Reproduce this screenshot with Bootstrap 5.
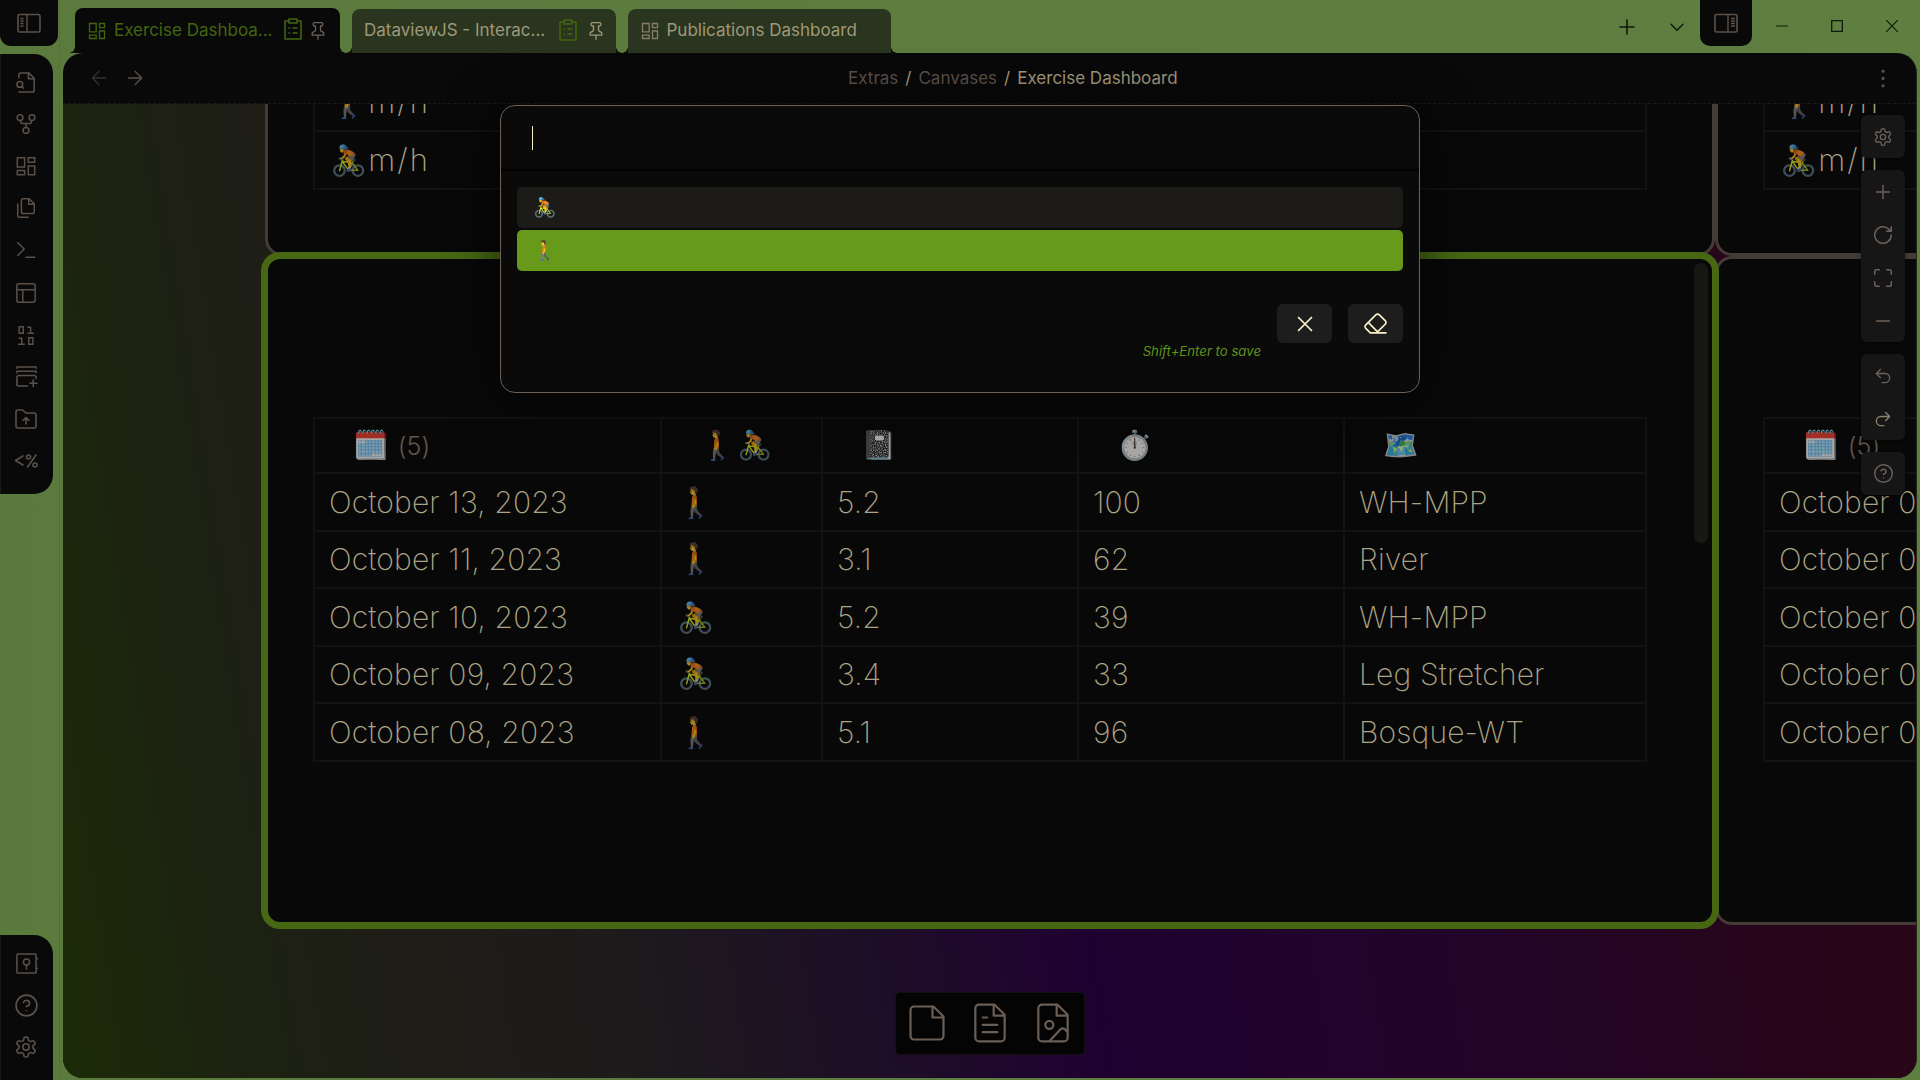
<!DOCTYPE html>
<html lang="en" data-bs-theme="dark">
<head>
<meta charset="utf-8">
<title>Exercise Dashboard</title>
<link href="https://cdn.jsdelivr.net/npm/bootstrap@5.3.0/dist/css/bootstrap.min.css" rel="stylesheet">
<style>
:root{--ink:#5b5149;--panel:#090909;--cream:#a29a7c;--line:#121212}
body{width:1920px;height:1080px;overflow:hidden;background:linear-gradient(90deg,#5b7a3d,#5f7f41);font-family:Inter,"Noto Color Emoji",sans-serif;font-size:17px;color:var(--cream)}
svg{display:block;fill:none;stroke:currentColor;stroke-width:1.6;stroke-linecap:round;stroke-linejoin:round;flex:none}
.rail{width:60px;color:var(--ink);border-right:1px solid #557138;padding-right:1px}
.rail-toggle{width:58px;height:46px;background:var(--panel);border-radius:0 0 11px 11px}
.rail-box{width:53px;background:var(--panel);border-left:1px solid #191919;padding-right:2px}
.rail-main{height:440px;margin-top:8px;border-radius:0 19px 19px 0;padding-top:7px}
.rail-foot{height:145px;border-radius:0 19px 0 0;padding-top:7px}
.rail-item{height:42.1px}
.topbar{height:53px;color:#10190a}
.tabs-wrap{padding-left:11px;gap:12px}
.doc-tab{height:44px;border-radius:8px 8px 0 0;background:#29351e;color:#a09878;white-space:nowrap;position:relative;width:263.5px}
.doc-tab::before,.doc-tab::after{content:"";position:absolute;bottom:0;width:6px;height:6px}
.doc-tab::before{left:-6px;background:radial-gradient(circle at 0 0,transparent 5.5px,#0d110a 6px)}
.doc-tab::after{right:-6px;background:radial-gradient(circle at 100% 0,transparent 5.5px,#0d110a 6px)}
.doc-tab.current{height:45px;width:265px;background:var(--panel);color:#42650f}
.right-toggle{width:52px;height:46px;background:var(--panel);border-radius:0 0 10px 10px;color:var(--ink)}
.leaf{width:1854px;height:1025px;margin-left:-1px;background:var(--panel);border-radius:20px;overflow:hidden;border-right:1px solid #22251d}
.leaf-head{height:51px;border-bottom:1px dashed #1a1a1a;color:var(--ink)}
.crumbs{margin-left:703px;gap:7px;padding-top:2px}
.crumb-last{color:var(--cream)}
.board{position:relative;height:974px;overflow:hidden;background:linear-gradient(81deg,#1b2b07 0%,#1c2211 9%,#1e1d17 18%,#1d1b1b 28%,#1e0c29 43%,#1f0131 52%,#220428 72%,#280518 90%,#2b0713 100%)}
.node{position:absolute;border:3px solid #443b37;border-radius:17px;background:#080808;padding:158px 42px 0 45px;overflow:hidden}
.node-a{left:202px;top:-249px;width:1450px;height:401px;padding:0 45px 63px}
.node-b{left:1652px;top:-249px;width:1500px;height:401px;padding:0 45px 63px}
.node-c{left:1652px;top:152px;width:1500px;height:669px}
.node-sel{left:198px;top:148px;width:1458px;height:677px;border:7px solid #466813;border-radius:19px}
.node-thumb{position:absolute;right:4px;top:4px;width:14px;height:280px;border-radius:7px;background:#181713}
.log{width:1334px;table-layout:fixed;border-collapse:collapse;font-size:30px;font-weight:200;letter-spacing:.15px;line-height:1;flex:none;color:#aca486}
.log td,.log th{border:2px solid var(--line);padding:0 0 0 14px;vertical-align:middle;white-space:nowrap;overflow:hidden}
.log tr.h57 td{padding-bottom:2px}
.log th{padding:2px 0 0 38px;font-weight:300;font-size:25px;color:#62564e}
.emo{opacity:.66;font-family:"Noto Color Emoji"}
.log th .emo{font-size:28.500px;letter-spacing:2px}
.log td .emo{font-size:30px;letter-spacing:0;padding-left:1px}
.speed{letter-spacing:2px;font-size:31px;padding-left:1px}
.h55{height:55px}.h57{height:57px}.h58{height:58px}
.tools{position:absolute;right:11px;top:11px;width:44px;gap:12px;color:#6e625a}
.tool-set{background:#161616;border-radius:6px;box-shadow:0 1px 3px #0008}
.tool-set>div{height:43px}
.makebar{position:absolute;left:832px;top:888px;width:190px;height:63px;border:1px solid #12110f;border-radius:5px;background:#040404;color:#6a5e55;gap:19px;padding-bottom:1px}
.makebar svg{stroke-width:1.2}
.prompt{position:absolute;left:500px;top:105px;width:920px;height:288px;border:1px solid #6d6056;border-radius:15px;background:#0a0a0a;box-shadow:0 4px 50px #000a}
.prompt-input{height:65px;border-bottom:2px solid #020202;padding:20px 0 0 31px}
.caret{width:1px;height:24px;background:#fbf1c7}
.choices{padding-top:16px;gap:2px}
.choice{height:41px;border-radius:5px;background:#1d1b17;padding-left:16px;font-size:19px;line-height:1;font-family:"Noto Color Emoji"}
.choice.picked{background:#67991a}
.prompt-foot{margin-top:33px}
.act{width:55px;height:39px;border-radius:6px;background:#1d1d1d;color:#fbf1c7;border:0;padding:0}
.hint{font-size:13.2px;font-style:italic;color:#5f9118;margin-top:38px}
</style>
</head>
<body>
<svg width="0" height="0" class="position-absolute">
<symbol id="grid" viewBox="0 0 24 24"><path d="M3 3h8v10H3zM15 3h6v5h-6zM15 12h6v9h-6zM3 17h8v4H3z" stroke-linejoin="miter"/></symbol>
<symbol id="clip" viewBox="0 0 24 24"><path d="M8 4H4v18h16V4h-4M8 2h8v4H8zM8 11h.5M12 11h4M8 16h.5M12 16h4"/></symbol>
<symbol id="pin" viewBox="0 0 24 24"><path d="M12 17v5M5 17h14v-1.800a2 2 0 0 0-1.100-1.800l-1.800-.9A2 2 0 0 1 15 10.800V6h1a2 2 0 0 0 0-4H8a2 2 0 0 0 0 4h1v4.800a2 2 0 0 1-1.100 1.700l-1.800.9A2 2 0 0 0 5 15.200Z"/></symbol>
<symbol id="gear" viewBox="0 0 24 24"><path d="M12.220 2h-.440a2 2 0 0 0-2 2v.180a2 2 0 0 1-1 1.730l-.430.250a2 2 0 0 1-2 0l-.150-.080a2 2 0 0 0-2.730.730l-.220.380a2 2 0 0 0 .730 2.730l.150.100a2 2 0 0 1 1 1.720v.510a2 2 0 0 1-1 1.740l-.150.090a2 2 0 0 0-.730 2.730l.220.380a2 2 0 0 0 2.730.730l.150-.080a2 2 0 0 1 2 0l.430.250a2 2 0 0 1 1 1.730V20a2 2 0 0 0 2 2h.440a2 2 0 0 0 2-2v-.180a2 2 0 0 1 1-1.730l.430-.250a2 2 0 0 1 2 0l.150.080a2 2 0 0 0 2.730-.730l.220-.390a2 2 0 0 0-.730-2.730l-.150-.080a2 2 0 0 1-1-1.740v-.500a2 2 0 0 1 1-1.740l.150-.090a2 2 0 0 0 .730-2.730l-.220-.380a2 2 0 0 0-2.730-.730l-.150.080a2 2 0 0 1-2 0l-.430-.250a2 2 0 0 1-1-1.730V4a2 2 0 0 0-2-2z"/><circle cx="12" cy="12" r="3.200"/></symbol>
<symbol id="help" viewBox="0 0 24 24"><circle cx="12" cy="12" r="10"/><path d="M9.100 9a3 3 0 0 1 5.800 1c0 2-3 3-3 3M12 17h.01"/></symbol>
<symbol id="plus" viewBox="0 0 24 24"><path d="M5 12h14M12 5v14"/></symbol>
<symbol id="x" viewBox="0 0 24 24"><path d="M18 6 6 18M6 6l12 12"/></symbol>
</svg>
<div class="d-flex h-100">
  <aside class="rail d-flex flex-column">
    <div class="rail-toggle d-flex align-items-center justify-content-center"><svg width="26" height="22" viewBox="0 0 26 22"><rect x="2" y="2.500" width="22" height="17.500" rx="1.500"/><path d="M11 2.500V20M4.500 6.500h3M4.500 9h3M4.500 11.500h3M4.500 14h3" stroke-linecap="butt" stroke-width="1.400"/></svg></div>
    <div class="rail-box rail-main">
      <div class="rail-item d-flex align-items-center justify-content-center"><svg width="23" height="23" viewBox="0 0 24 24"><path d="M4 7V4a2 2 0 0 1 2-2h8.500L20 7.500V20a2 2 0 0 1-2 2H4M14 2v6h6"/><circle cx="5" cy="14" r="3"/><path d="m9 18-1.500-1.500"/></svg></div>
      <div class="rail-item d-flex align-items-center justify-content-center"><svg width="22" height="22" viewBox="0 0 24 24"><circle cx="12" cy="19" r="3.200"/><circle cx="5.500" cy="5" r="3.200"/><circle cx="18.500" cy="5" r="3.200"/><path d="M18 8.500c0 2-.5 3-2 3H8c-1.500 0-2-1-2-3M12 11.500v4"/></svg></div>
      <div class="rail-item d-flex align-items-center justify-content-center"><svg width="22" height="22" viewBox="0 0 24 24"><path d="M2.500 3h8v10h-8zM14.500 3h7v5h-7zM14.500 12h7v9.500h-7zM2.500 17h8v4.500h-8z" stroke-linejoin="miter"/></svg></div>
      <div class="rail-item d-flex align-items-center justify-content-center"><svg width="22" height="22" viewBox="0 0 24 24"><path d="M15.500 2H9a2 2 0 0 0-2 2v12a2 2 0 0 0 2 2h10a2 2 0 0 0 2-2V7.500ZM15 2v6h6M3 7.600v12.800A1.600 1.600 0 0 0 4.600 22h9.800"/></svg></div>
      <div class="rail-item d-flex align-items-center justify-content-center"><svg width="22" height="22" viewBox="0 0 24 24"><path d="m3 18 7-7-7-7M12 20h9.500"/></svg></div>
      <div class="rail-item d-flex align-items-center justify-content-center"><svg width="22" height="22" viewBox="0 0 24 24"><rect x="2" y="2" width="20" height="20" rx="2"/><path d="M2 8.500h20M8.500 8.500V22"/></svg></div>
      <div class="rail-item d-flex align-items-center justify-content-center"><svg width="22" height="22" viewBox="0 0 24 24"><path d="M4.500 3h4.500v7H4.500zM15 15h4.500v7H15zM14 10h6M14 3.500h3V10M4 22h6M4.500 15.500h2.800V22" stroke-linejoin="miter"/></svg></div>
      <div class="rail-item d-flex align-items-center justify-content-center"><svg width="23" height="23" viewBox="0 0 24 24"><path d="M2 3.500V2h20v1.500M2 8V6.500h20V8M13 22H4a2 2 0 0 1-2-2v-7a2 2 0 0 1 2-2h16a2 2 0 0 1 2 2v1M19 15.500v7M15.500 19h7.500"/></svg></div>
      <div class="rail-item d-flex align-items-center justify-content-center"><svg width="24" height="24" viewBox="0 0 24 24"><path d="M4 21a2 2 0 0 1-2-2V5a2 2 0 0 1 2-2h4.500l3.500 3h8a2 2 0 0 1 2 2v11a2 2 0 0 1-2 2ZM12 17v-6M9 13.500l3-3 3 3"/></svg></div>
      <div class="rail-item d-flex align-items-center justify-content-center"><svg width="24" height="22" viewBox="0 0 24 22"><path d="M9 6 1.500 10.500 9 15M22 5l-8.500 12"/><circle cx="14.500" cy="7" r="2"/><circle cx="21" cy="15" r="2"/></svg></div>
    </div>
    <div class="rail-box rail-foot mt-auto">
      <div class="rail-item d-flex align-items-center justify-content-center"><svg width="23" height="23" viewBox="0 0 24 24"><rect x="2" y="2" width="20" height="20" rx="1"/><circle cx="12" cy="10.500" r="3.200"/><path d="M12 14v4M23.500 7h-1M23.500 17h-1"/></svg></div>
      <div class="rail-item d-flex align-items-center justify-content-center"><svg width="25" height="25"><use href="#help"/></svg></div>
      <div class="rail-item d-flex align-items-center justify-content-center"><svg width="24" height="24"><use href="#gear"/></svg></div>
    </div>
  </aside>
  <div class="d-flex flex-column ps-1 flex-grow-1">
    <header class="topbar d-flex align-items-end">
      <div class="tabs-wrap d-flex align-items-end">
        <div class="doc-tab current d-flex align-items-center ps-2"><svg style="margin:0 7px 0 4px" width="20" height="20"><use href="#grid"/></svg><span>Exercise Dashboa...</span><svg style="margin:0 0 3px 8px" width="24" height="24"><use href="#clip"/></svg><svg class="ms-auto" style="margin-right:12px" width="20" height="20" color="#6b6057"><use href="#pin"/></svg></div>
        <div class="doc-tab d-flex align-items-center"><span style="padding-left:12px">DataviewJS - Interac...</span><svg class="ms-auto" style="margin-bottom:3px" width="24" height="24" color="#42650f"><use href="#clip"/></svg><svg style="margin:0 10px 0 6px" width="20" height="20"><use href="#pin"/></svg></div>
        <div class="doc-tab d-flex align-items-center"><svg style="margin:0 7px 0 12px" width="20" height="20" color="#857d66"><use href="#grid"/></svg><span>Publications Dashboard</span></div>
      </div>
      <div class="d-flex ms-auto align-self-start">
        <div class="d-flex align-items-center pt-2" style="height:46px;gap:27px;margin-right:12px"><svg width="24" height="24"><use href="#plus"/></svg><svg width="22" height="22" viewBox="0 0 24 24"><path d="m5.500 9 6.500 6.500L18.500 9"/></svg></div>
        <div class="right-toggle d-flex align-items-center justify-content-center"><svg width="26" height="22" viewBox="0 0 26 22"><rect x="2" y="2.500" width="22" height="17.500" rx="1.500"/><path d="M15 2.500V20M18 6.500h4M18 9h4M18 11.500h4M18 14h4" stroke-linecap="butt" stroke-width="1.400"/></svg></div>
        <div class="d-flex align-items-center" style="height:51px;gap:43px;padding:0 22px 0 24px"><svg width="12" height="12"><path d="M0 6h12" stroke-width="1.200"/></svg><svg width="12" height="12"><path d="M.7.7h10.600v10.600H.7z" stroke-width="1.300" stroke-linejoin="miter"/></svg><svg width="12" height="12"><path d="m.7.7 10.600 10.600M11.300.7.7 11.300" stroke-width="1.200"/></svg></div>
      </div>
    </header>
    <main class="leaf">
      <div class="leaf-head d-flex align-items-center">
        <svg style="margin-left:26px;opacity:.55" width="20" height="20" viewBox="0 0 24 24"><path d="M20 12H4M12 4l-8 8 8 8"/></svg>
        <svg style="margin-left:16px" width="20" height="20" viewBox="0 0 24 24"><path d="M4 12h16M12 4l8 8-8 8"/></svg>
        <div class="crumbs d-flex"><span>Extras</span><span class="crumb-last">/</span><span>Canvases</span><span class="crumb-last">/</span><span class="crumb-last">Exercise Dashboard</span></div>
        <svg class="ms-auto" style="margin-right:22px" width="22" height="22" viewBox="0 0 24 24"><path d="M12 4.500h.01M12 12.500h.01M12 20.500h.01" stroke-width="3.600"/></svg>
      </div>
      <div class="board">
        <section class="node node-a d-flex flex-column justify-content-end">
          <table class="log"><tr class="h58"><td><span class="emo">🚶</span><span class="speed">m/h</span></td></tr><tr class="h58"><td><span class="emo">🚴</span><span class="speed">m/h</span></td></tr></table>
        </section>
        <section class="node node-b d-flex flex-column justify-content-end">
          <table class="log"><tr class="h58"><td><span class="emo">🚶</span><span class="speed">m/h</span></td></tr><tr class="h58"><td><span class="emo">🚴</span><span class="speed">m/h</span></td></tr></table>
        </section>
        <section class="node node-c">
          <table class="log"><colgroup><col style="width:347px"><col></colgroup>
            <tr class="h55"><th><span class="emo">🗓️</span> (5)</th><th></th></tr>
            <tr class="h58"><td>October 07, 2023</td><td></td></tr>
            <tr class="h57"><td>October 06, 2023</td><td></td></tr>
            <tr class="h58"><td>October 05, 2023</td><td></td></tr>
            <tr class="h57"><td>October 04, 2023</td><td></td></tr>
            <tr class="h58"><td>October 03, 2023</td><td></td></tr>
          </table>
        </section>
        <section class="node node-sel">
          <table class="log"><colgroup><col style="width:347px"><col style="width:161px"><col style="width:256px"><col style="width:266px"><col></colgroup>
            <tr class="h55"><th><span class="emo">🗓️</span> (5)</th><th><span class="emo">🚶🚴</span></th><th><span class="emo">📓</span></th><th><span class="emo">⏱️</span></th><th><span class="emo">🗺️</span></th></tr>
            <tr class="h58"><td>October 13, 2023</td><td><span class="emo">🚶</span></td><td>5.2</td><td>100</td><td>WH-MPP</td></tr>
            <tr class="h57"><td>October 11, 2023</td><td><span class="emo">🚶</span></td><td>3.1</td><td>62</td><td>River</td></tr>
            <tr class="h58"><td>October 10, 2023</td><td><span class="emo">🚴</span></td><td>5.2</td><td>39</td><td>WH-MPP</td></tr>
            <tr class="h57"><td>October 09, 2023</td><td><span class="emo">🚴</span></td><td>3.4</td><td>33</td><td>Leg Stretcher</td></tr>
            <tr class="h58"><td>October 08, 2023</td><td><span class="emo">🚶</span></td><td>5.1</td><td>96</td><td>Bosque-WT</td></tr>
          </table>
          <div class="node-thumb"></div>
        </section>
        <div class="tools d-flex flex-column">
          <div class="tool-set"><div class="d-flex align-items-center justify-content-center"><svg width="20" height="20"><use href="#gear"/></svg></div></div>
          <div class="tool-set">
            <div class="d-flex align-items-center justify-content-center"><svg width="22" height="22"><use href="#plus"/></svg></div>
            <div class="d-flex align-items-center justify-content-center"><svg width="22" height="22" viewBox="0 0 24 24"><path d="M21 12a9 9 0 1 1-2.640-6.360L21 8M21 3v5h-5"/></svg></div>
            <div class="d-flex align-items-center justify-content-center"><svg width="22" height="22" viewBox="0 0 24 24"><path d="M3 8V5a2 2 0 0 1 2-2h3M16 3h3a2 2 0 0 1 2 2v3M21 16v3a2 2 0 0 1-2 2h-3M8 21H5a2 2 0 0 1-2-2v-3"/></svg></div>
            <div class="d-flex align-items-center justify-content-center"><svg width="22" height="22" viewBox="0 0 24 24"><path d="M5 12h14"/></svg></div>
          </div>
          <div class="tool-set">
            <div class="d-flex align-items-center justify-content-center"><svg width="20" height="20" viewBox="0 0 24 24"><path d="M9 14 4 9l5-5M4 9h10.500a5.500 5.500 0 0 1 0 11H11"/></svg></div>
            <div class="d-flex align-items-center justify-content-center"><svg width="20" height="20" viewBox="0 0 24 24" color="#8d8068"><path d="m15 14 5-5-5-5M20 9H9.500a5.500 5.500 0 0 0 0 11H13"/></svg></div>
          </div>
          <div class="tool-set"><div class="d-flex align-items-center justify-content-center"><svg width="21" height="21"><use href="#help"/></svg></div></div>
        </div>
        <div class="makebar d-flex align-items-center justify-content-center">
          <svg width="44" height="44" viewBox="0 0 24 24"><path d="M15.500 3H5a2 2 0 0 0-2 2v14a2 2 0 0 0 2 2h14a2 2 0 0 0 2-2V8.500ZM15 3v6h6"/></svg>
          <svg width="44" height="44" viewBox="0 0 24 24"><path d="M14.500 2H6a2 2 0 0 0-2 2v16a2 2 0 0 0 2 2h12a2 2 0 0 0 2-2V7.500ZM14 2v6h6M8 9h2.500M8 13h8M8 17h8"/></svg>
          <svg width="44" height="44" viewBox="0 0 24 24"><path d="M14.500 2H6a2 2 0 0 0-2 2v16a2 2 0 0 0 2 2h12a2 2 0 0 0 2-2V7.500ZM14 2v6h6M10 22l6-6.500c.8-.8 1.500-.9 2.500-.1l1.500 1.600"/><circle cx="10" cy="13" r="2.200"/></svg>
        </div>
      </div>
    </main>
  </div>
</div>
<div class="prompt" role="dialog">
  <div class="prompt-input"><div class="caret"></div></div>
  <div class="choices d-flex flex-column px-3">
    <div class="choice d-flex align-items-center">🚴</div>
    <div class="choice picked d-flex align-items-center">🚶</div>
  </div>
  <div class="prompt-foot d-flex justify-content-end align-items-start gap-3 px-3">
    <span class="hint">Shift+Enter to save</span>
    <button class="act d-flex align-items-center justify-content-center" type="button"><svg width="26" height="26"><use href="#x"/></svg></button>
    <button class="act d-flex align-items-center justify-content-center" type="button"><svg width="25" height="25" viewBox="0 0 24 24"><path d="m7 21-4.300-4.300c-1-1-1-2.500 0-3.400l9.600-9.600c1-1 2.500-1 3.400 0l5.600 5.600c1 1 1 2.500 0 3.400L13 21M22 21H7M5 11l9 9"/></svg></button>
  </div>
</div>
<script src="https://cdn.jsdelivr.net/npm/bootstrap@5.3.0/dist/js/bootstrap.bundle.min.js"></script>
</body>
</html>
